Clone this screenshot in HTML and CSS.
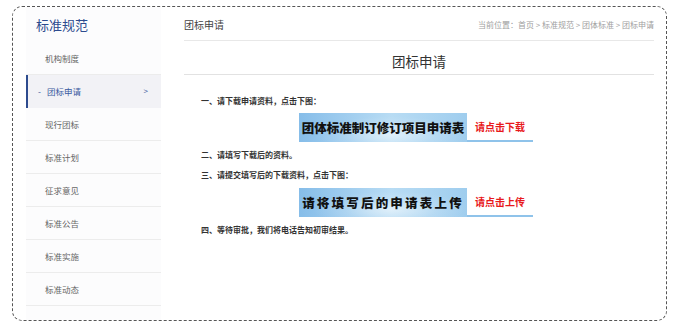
FILE: index.html
```html
<!DOCTYPE html>
<html>
  <head>
    <meta charset="utf-8" />
    <meta name="viewport" content="width=device-width, initial-scale=1.0" />
    <link rel="stylesheet" href="styles.css">
  </head>

  <body>
    <div id="wrap">
      <div class="sidebar">
        <div class="sideTitle">标准规范</div>
        <ul class="menu">
          <li class="menuItem">机构制度</li>
          <li class="menuItem active">
            <span class="dash">-</span>团标申请<span class="arrow">&gt;</span>
          </li>
          <li class="menuItem">现行团标</li>
          <li class="menuItem">标准计划</li>
          <li class="menuItem">征求意见</li>
          <li class="menuItem">标准公告</li>
          <li class="menuItem">标准实施</li>
          <li class="menuItem">标准动态</li>
        </ul>
      </div>

      <div class="main">
        <div class="crumbs">
          <span class="crumbTitle">团标申请</span>
          <span class="path">当前位置：首页 &gt; 标准规范 &gt; 团体标准 &gt; 团标申请</span>
        </div>
        <h1 class="pageTitle">团标申请</h1>
        <div class="article">
          <p class="step first">一、请下载申请资料，点击下图：</p>
          <div class="banner">
            <span class="bannerMain">团体标准制订修订项目申请表</span>
            <span class="bannerLink">请点击下载</span>
          </div>
          <p class="step">二、请填写下载后的资料。</p>
          <p class="step">三、请提交填写后的下载资料，点击下图：</p>
          <div class="banner">
            <span class="bannerMain wide">请将填写后的申请表上传</span>
            <span class="bannerLink">请点击上传</span>
          </div>
          <p class="step">四、等待审批，我们将电话告知初审结果。</p>
        </div>
      </div>
    </div>
  </body>
</html>
```

FILE: styles.css
```css
html {
  font-family: "Noto Sans CJK SC", "Noto Sans", sans-serif;
}

body {
  margin: 0;
  background: #fff;
}

#wrap {
  box-sizing: border-box;
  width: 655px;
  height: 315px;
  margin: 6px 0 0 12px;
  padding: 0 12px 0 13px;
  border: 1px dashed #555;
  border-radius: 10px;
  display: flex;
  gap: 23px;
}

.sidebar {
  width: 135px;
  flex: none;
  background-color: #fcfcfd;
}

.sideTitle {
  height: 35px;
  padding: 9px 0 0 10px;
  box-sizing: border-box;
  font-size: 13px;
  line-height: 18px;
  color: #2d4b8e;
}

.menu {
  list-style: none;
  margin: 0;
  padding: 0;
}

.menuItem {
  height: 33px;
  box-sizing: border-box;
  border-bottom: 1px solid #ececec;
  padding-left: 19px;
  font-size: 8.5px;
  line-height: 32px;
  color: #666;
  display: flex;
}

.menuItem.active {
  border-left: 2px solid #2d4b8e;
  border-bottom: 0;
  padding-left: 10px;
  background-color: #f2f2f6;
  color: #3a5aa0;
}

.dash {
  width: 9px;
}

.arrow {
  margin-left: auto;
  margin-right: 13px;
  font-size: 8px;
}

.main {
  flex: 1;
  display: flex;
  flex-direction: column;
}

.crumbs {
  height: 34px;
  box-sizing: border-box;
  border-bottom: 1px solid #e8e8e8;
  display: flex;
  align-items: center;
  justify-content: space-between;
  padding-top: 2px;
}

.crumbTitle {
  font-size: 10px;
  color: #444;
}

.path {
  font-size: 8px;
  color: #a0a0a0;
}

.pageTitle {
  margin: 0;
  height: 34px;
  box-sizing: border-box;
  padding-top: 11px;
  border-bottom: 1px solid #e2e2e2;
  text-align: center;
  font-size: 13.5px;
  line-height: 18px;
  font-weight: 400;
  color: #333;
}

.article {
  padding: 19px 17px 0;
}

.step {
  margin: 0 0 6px;
  font-size: 8px;
  line-height: 14px;
  font-weight: 700;
  color: #333;
}

.step.first {
  margin-bottom: 5px;
}

.banner {
  width: 234px;
  height: 29px;
  margin: 0 0 6px 98px;
  display: flex;
}

.bannerMain {
  width: 168px;
  flex: none;
  display: flex;
  align-items: center;
  justify-content: center;
  font-size: 12.5px;
  font-weight: 900;
  color: #111;
  white-space: nowrap;
  background: radial-gradient(
      ellipse at 55% 75%,
      rgba(255, 255, 255, 0.55) 0%,
      rgba(255, 255, 255, 0.15) 35%,
      transparent 60%
    ),
    linear-gradient(90deg, #86bde9, #b8dcf4 55%, #9fcdee);
}

.bannerMain.wide {
  letter-spacing: 2.2px;
}

.bannerLink {
  flex: 1;
  display: flex;
  align-items: center;
  justify-content: center;
  font-size: 10px;
  font-weight: 700;
  color: #e8191c;
  border-bottom: 2px solid #8fc3ea;
  box-sizing: border-box;
}
```
